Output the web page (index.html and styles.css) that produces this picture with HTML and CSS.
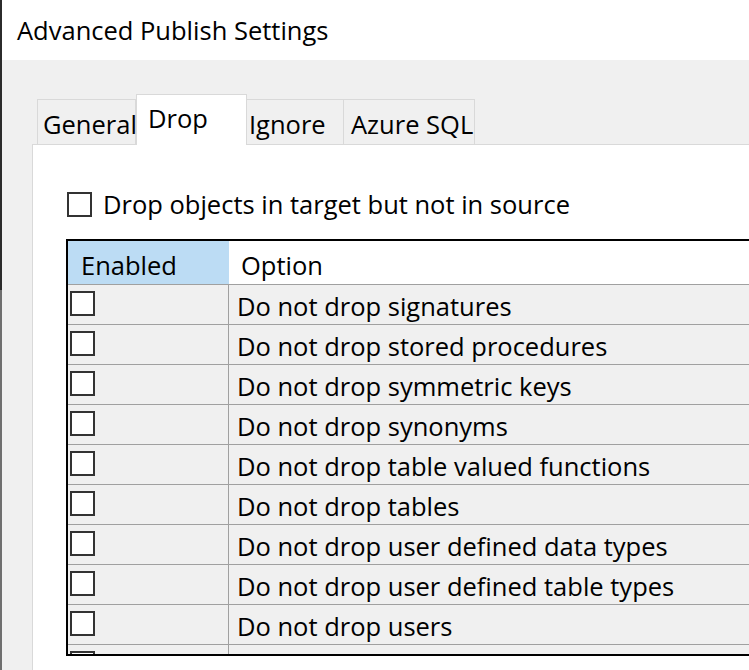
FILE: index.html
```html
<!DOCTYPE html>
<html>
<head>
    <title>Advanced Publish Settings</title>
    <link rel="stylesheet" href="styles.css">
</head>
<body>
    <div class="screen">
        <div class="edge"></div>
        <div class="dialog">
            <div class="titlebar">Advanced Publish Settings</div>

            <div class="dialogbody">
                <!-- tab strip -->
                <div class="tabs">
                    <div class="tab tab-general">General</div>
                    <div class="tab tab-drop selected">Drop</div>
                    <div class="tab tab-ignore">Ignore</div>
                    <div class="tab tab-azure">Azure SQL</div>
                </div>

                <div class="panel">
                    <label class="dropall">
                        <span class="box"></span>
                        Drop objects in target but not in source
                    </label>

                    <div class="grid">
                        <div class="row header">
                            <div class="cell enabled">Enabled</div>
                            <div class="cell option">Option</div>
                        </div>
                        <div class="row">
                            <div class="cell enabled"><span class="box"></span></div>
                            <div class="cell option">Do not drop signatures</div>
                        </div>
                        <div class="row">
                            <div class="cell enabled"><span class="box"></span></div>
                            <div class="cell option">Do not drop stored procedures</div>
                        </div>
                        <div class="row">
                            <div class="cell enabled"><span class="box"></span></div>
                            <div class="cell option">Do not drop symmetric keys</div>
                        </div>
                        <div class="row">
                            <div class="cell enabled"><span class="box"></span></div>
                            <div class="cell option">Do not drop synonyms</div>
                        </div>
                        <div class="row">
                            <div class="cell enabled"><span class="box"></span></div>
                            <div class="cell option">Do not drop table valued functions</div>
                        </div>
                        <div class="row">
                            <div class="cell enabled"><span class="box"></span></div>
                            <div class="cell option">Do not drop tables</div>
                        </div>
                        <div class="row">
                            <div class="cell enabled"><span class="box"></span></div>
                            <div class="cell option">Do not drop user defined data types</div>
                        </div>
                        <div class="row">
                            <div class="cell enabled"><span class="box"></span></div>
                            <div class="cell option">Do not drop user defined table types</div>
                        </div>
                        <div class="row">
                            <div class="cell enabled"><span class="box"></span></div>
                            <div class="cell option">Do not drop users</div>
                        </div>
                        <div class="row">
                            <div class="cell enabled"><span class="box"></span></div>
                            <div class="cell option"></div>
                        </div>
                    </div>
                </div>
            </div>
        </div>
    </div>
</body>
</html>
```

FILE: styles.css
```css
body
{
    margin: 0;
    font-family: "Open Sans", "Noto Sans", sans-serif;
    font-size: 25.5px;
    color: #000000;
    background-color: #f0f0f0;
    overflow: hidden;
}
.screen
{
    display: flex;
    height: 670px;
    overflow: hidden;
}
.edge
{
    width: 2px;
    flex: none;
    background: linear-gradient(#2b2b2b 0, #2b2b2b 290px, #6f6f6f 290px);
}
.dialog
{
    flex: 1;
    min-width: 0;
    background-color: #f0f0f0;
}
.titlebar
{
    height: 60px;
    box-sizing: border-box;
    padding: 13px 0 0 15px;
    background-color: #FFFFFF;
}
.dialogbody
{
    padding-top: 34px;
}

/* tabs */
.tabs
{
    display: flex;
    align-items: flex-end;
    padding-left: 35px;
    height: 50px;
}
.tab
{
    height: 45px;
    box-sizing: border-box;
    border: 1px solid #d9d9d9;
    border-bottom: none;
    padding-top: 7px;
    white-space: nowrap;
}
.tab + .tab
{
    border-left: none;
}
.tab-general
{
    width: 99px;
    padding-left: 5px;
}
.tab-drop
{
    width: 111px;
    padding-left: 11px;
}
.tab-ignore
{
    width: 97px;
    padding-left: 2px;
}
.tab-azure
{
    width: 131px;
    padding-left: 7px;
}
.tab.selected
{
    position: relative;
    z-index: 1;
    height: 51px;
    margin-bottom: -1px;
    padding-top: 6px;
    background-color: #FFFFFF;
    border-left: 1px solid #d9d9d9;
}
.selected + .tab
{
    border-left: none;
}

/* tab page */
.panel
{
    margin-left: 30px;
    height: 482px;
    border-top: 1px solid #d9d9d9;
    border-left: 1px solid #d9d9d9;
    background-color: #FFFFFF;
    padding: 43px 0 0 33px;
}
.dropall
{
    display: flex;
    align-items: center;
    gap: 11px;
    height: 32px;
    margin-left: 1px;
    white-space: nowrap;
}
.box
{
    display: block;
    width: 21px;
    height: 21px;
    flex: none;
    border: 2px solid #333333;
    background-color: #FFFFFF;
}

/* data grid */
.grid
{
    margin-top: 19px;
    width: 681px;
    height: 413px;
    overflow: hidden;
    border-top: 2px solid #000000;
    border-left: 2px solid #000000;
    border-bottom: 2px solid #000000;
    background-color: #f0f0f0;
}
.row
{
    display: flex;
    height: 39px;
    border-bottom: 1px solid #a0a0a0;
}
.row.header
{
    height: 43px;
    background-color: #FFFFFF;
}
.cell
{
    box-sizing: border-box;
    white-space: nowrap;
}
.cell.enabled
{
    width: 161px;
    border-right: 1px solid #a0a0a0;
    padding: 6px 0 0 2px;
}
.cell.option
{
    flex: 1;
    padding: 4px 0 0 8px;
}
.header .cell
{
    padding-top: 7px;
}
.header .enabled
{
    background-color: #bcdcf4;
    border-right: none;
    padding-left: 13px;
}
.header .option
{
    padding-left: 12px;
}
```
